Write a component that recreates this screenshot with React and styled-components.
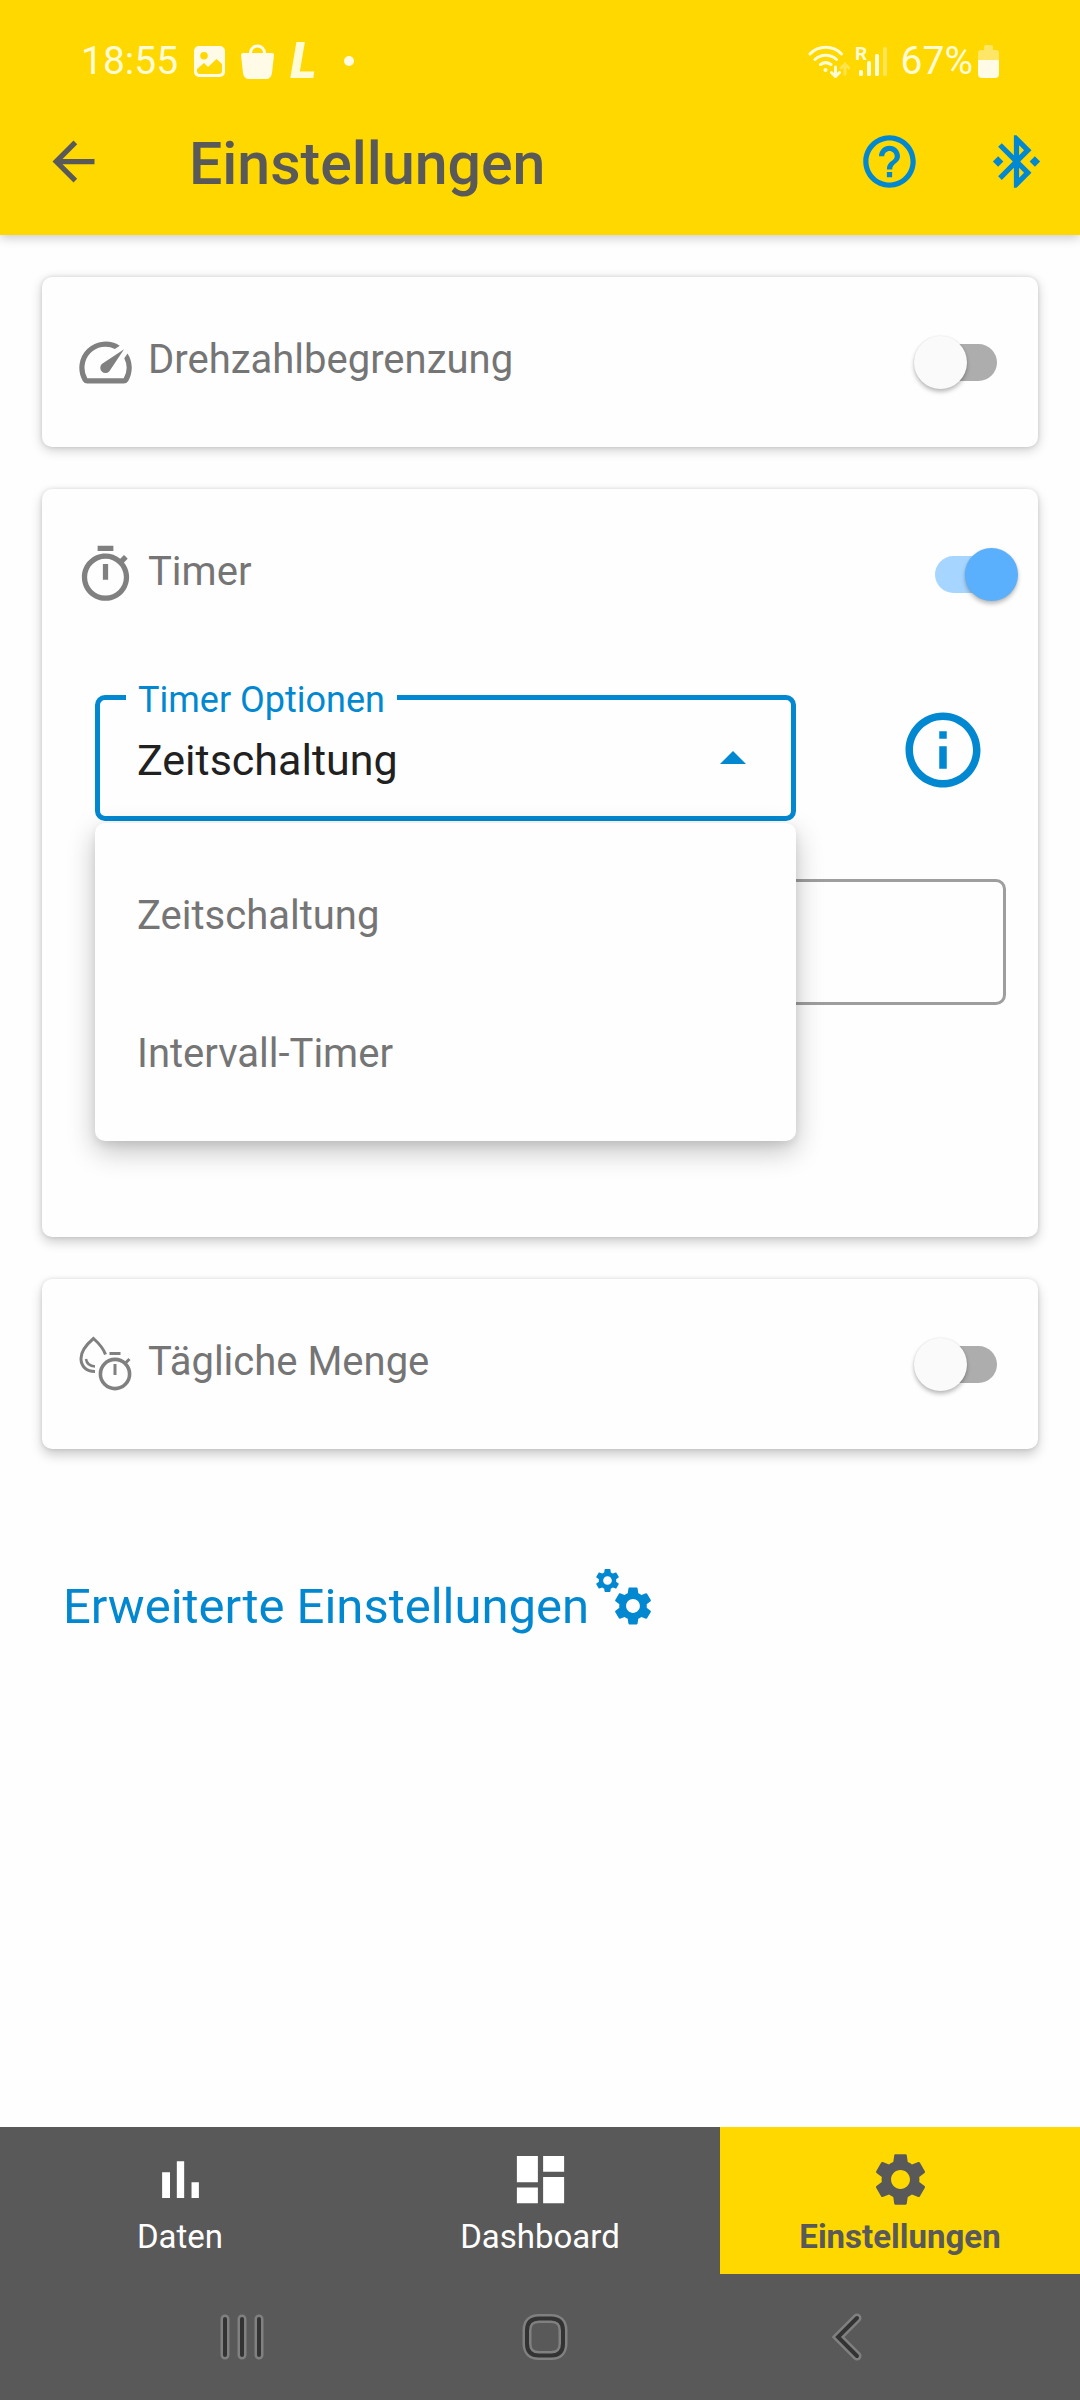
import React, { useState } from 'react';
import styled, { createGlobalStyle, css } from 'styled-components';
import {
  MdArrowBack,
  MdBluetoothConnected,
  MdDashboard,
  MdHelpOutline,
  MdInfoOutline,
  MdOutlineTimer,
  MdSettings,
  MdSpeed,
} from 'react-icons/md';

const yellow = '#ffd800';
const blue = '#0288d1';
const dark = '#595959';
const grey = '#757575';

const GlobalStyle = createGlobalStyle`
  * {
    box-sizing: border-box;
  }

  body {
    margin: 0;
    background-color: #fefefe;
    font-family: Roboto, 'Liberation Sans', sans-serif;
  }

  button, input, select {
    font-family: inherit;
  }
`;

const Screen = styled.div`
  display: flex;
  flex-direction: column;
  min-height: 100vh;
`;

const Header = styled.header`
  background-color: ${yellow};
  box-shadow: 0 3px 10px rgba(0, 0, 0, 0.2);
`;

const StatusBar = styled.div`
  display: flex;
  align-items: center;
  justify-content: space-between;
  height: 88px;
  padding: 34px 81px 0;
  color: #fffbd6;
  font-size: 39px;
  line-height: 48px;
`;

const StatusGroup = styled.div`
  display: flex;
  align-items: center;
  gap: ${props => props.$gap}px;
`;

const AppMark = styled.span`
  font-size: 50px;
  font-style: italic;
  font-weight: 900;
`;

const Dot = styled.span`
  width: 10px;
  height: 10px;
  margin-left: 12px;
  border-radius: 50%;
  background-color: #fffbe6;
`;

const Toolbar = styled.div`
  display: flex;
  align-items: center;
  height: 147px;
  padding: 0 32px 0 42px;
`;

const IconButton = styled.button`
  display: flex;
  flex-shrink: 0;
  padding: 0;
  border: none;
  background: none;
  color: ${props => props.$color};
  cursor: pointer;
`;

const Title = styled.h1`
  flex-grow: 1;
  margin: 0;
  padding: 4px 0 0 84px;
  color: ${dark};
  font-size: 59px;
  font-weight: 500;
  line-height: 68px;
`;

const Actions = styled.div`
  display: flex;
  gap: 64px;
`;

const Content = styled.main`
  display: flex;
  flex-direction: column;
  flex-grow: 1;
  gap: 42px;
  padding: 42px;
`;

const Card = styled.section`
  border-radius: 10px;
  background-color: #fefefe;
  box-shadow: 0 ${props => props.$depth}px 12px rgba(0, 0, 0, 0.2), 0 0 4px rgba(0, 0, 0, 0.12);
`;

const SettingRow = styled.label`
  display: flex;
  align-items: center;
  gap: 11px;
  height: 170px;
  padding: 0 20px 0 32px;
  color: ${grey};
  cursor: pointer;

  & > svg {
    flex-shrink: 0;
    color: #808080;
  }
`;

const SettingName = styled.span`
  flex-grow: 1;
  padding-bottom: 4px;
  font-size: 40px;
  line-height: 48px;
`;

const Switch = styled.input`
  position: relative;
  appearance: none;
  flex-shrink: 0;
  width: 104px;
  height: 53px;
  margin: 0;
  cursor: pointer;

  &::before {
    content: '';
    position: absolute;
    inset: 8px 21px;
    border-radius: 19px;
    background-color: #adadad;
  }

  &::after {
    content: '';
    position: absolute;
    top: 0;
    left: 0;
    width: 53px;
    height: 53px;
    border-radius: 50%;
    background-color: #fafafa;
    box-shadow: 0 3px 4px rgba(0, 0, 0, 0.25), 0 0 2px rgba(0, 0, 0, 0.1);
  }

  &:checked::before {
    background-color: #a6d6ff;
  }

  &:checked::after {
    left: auto;
    right: 0;
    background-color: #5ab0fc;
  }
`;

const TimerBody = styled.div`
  padding: 36px 32px 232px 53px;
`;

const OptionRow = styled.div`
  display: flex;
  align-items: center;
  gap: 102px;
  margin-bottom: 58px;
  padding-right: 18px;

  & > button {
    padding-bottom: 16px;
  }
`;

const SelectField = styled.div`
  position: relative;
  flex-grow: 1;
`;

const fieldBox = css`
  display: block;
  width: 100%;
  height: 126px;
  border-radius: 10px;
  background-color: transparent;
  color: #212121;
  font-size: 43px;
  outline: none;
`;

const Select = styled.select`
  ${fieldBox}
  appearance: none;
  padding: 4px 80px 0 37px;
  border: 5px solid ${blue};
`;

const TimeInput = styled.input`
  ${fieldBox}
  padding: 0 39px;
  border: 3px solid #9e9e9e;
`;

const FieldLabel = styled.label`
  position: absolute;
  top: -16px;
  left: 31px;
  padding: 0 12px;
  background-color: #fefefe;
  color: ${blue};
  font-size: 36px;
  line-height: 42px;
`;

const Caret = styled.span`
  position: absolute;
  top: 56px;
  right: 50px;
  border-right: 13px solid transparent;
  border-bottom: 13px solid ${blue};
  border-left: 13px solid transparent;
  pointer-events: none;
`;

const Menu = styled.ul`
  position: absolute;
  top: 128px;
  right: 0;
  left: 0;
  z-index: 1;
  margin: 0;
  padding: 23px 0 19px;
  border-radius: 10px;
  background-color: #fefefe;
  box-shadow: 0 10px 28px rgba(0, 0, 0, 0.24), 0 4px 8px rgba(0, 0, 0, 0.08);
  list-style: none;
`;

const MenuItem = styled.button`
  display: block;
  width: 100%;
  height: 138px;
  padding: 0 42px;
  border: none;
  background: none;
  color: ${grey};
  font-size: 40px;
  text-align: left;
  cursor: pointer;
`;

const AdvancedLink = styled.a`
  display: flex;
  align-items: flex-start;
  align-self: flex-start;
  gap: 7px;
  margin: 77px 0 0 21px;
  color: ${blue};
  font-size: 49px;
  line-height: 60px;
  text-decoration: none;

  span {
    padding-top: 9px;
  }
`;

const TabBar = styled.nav`
  display: grid;
  grid-template-columns: repeat(3, 1fr);
  background-color: ${dark};
`;

const Tab = styled.a`
  display: flex;
  flex-direction: column;
  align-items: center;
  gap: 7px;
  height: 147px;
  padding-top: 21px;
  background-color: ${props => (props.$active ? yellow : dark)};
  color: ${props => (props.$active ? dark : '#fff')};
  font-size: 33px;
  font-weight: ${props => (props.$active ? 700 : 400)};
  line-height: 38px;
  text-decoration: none;
`;

const SystemBar = styled.div`
  display: flex;
  align-items: center;
  justify-content: space-between;
  height: 126px;
  padding: 0 207px 0 216px;
  background-color: ${dark};
`;

const PhotoIcon = () => (
  <svg width="31" height="31" viewBox="0 0 31 31" aria-hidden="true">
    <path
      fill="#fffbe6"
      fillRule="evenodd"
      d="M5 0h21a5 5 0 0 1 5 5v21a5 5 0 0 1-5 5H5a5 5 0 0 1-5-5V5a5 5 0 0 1 5-5zM10 6a3.8 3.8 0 1 0 0 7.600a3.800 3.800 0 0 0 0-7.600zM3 23v2q0 3 3 3h19q3 0 3-3v-7l-5.500-5L14 21l-4-4z"
    />
  </svg>
);

const BagIcon = () => (
  <svg width="33" height="35" viewBox="0 0 33 35" aria-hidden="true">
    <path d="M9.500 11V9a7 7 0 0 1 14 0v2" fill="none" stroke="#fffbe6" strokeWidth="3" />
    <path d="M2 9h29q2 0 2 2l-2 18q-1 6-6 6H8q-5 0-6-6L0 11q0-2 2-2z" fill="#fffbe6" />
  </svg>
);

const WifiIcon = () => (
  <svg width="42" height="33" viewBox="0 0 42 33" fill="none" stroke="#fffbd6" strokeWidth="3" strokeLinecap="round" aria-hidden="true">
    <path d="M2 9a22 22 0 0 1 31.500 0M7 14.500a16 16 0 0 1 21.500 0M12.500 19.500a9 9 0 0 1 10.500 0" />
    <circle cx="17.500" cy="25" r="2" fill="#fffbd6" stroke="none" />
    <path d="M27.500 22v9M23.500 27.500l4 4 4-4" />
    <path d="M37 29V19M33 23l4-4 4 4" opacity=".35" />
  </svg>
);

const SignalBars = styled.svg`
  overflow: visible;
`;

const SignalIcon = () => (
  <SignalBars width="33" height="33" viewBox="0 0 33 33" fill="#fffbd6" aria-hidden="true">
    <text x="0" y="15" fontSize="19" fontWeight="700">R</text>
    <rect x="4" y="25" width="4" height="6" rx="1.500" />
    <rect x="12" y="16" width="4" height="15" rx="1.500" />
    <rect x="20" y="9" width="4" height="22" rx="1.500" />
    <rect x="28" y="2" width="4" height="29" rx="1.500" opacity=".4" />
  </SignalBars>
);

const BatteryIcon = () => (
  <svg width="21" height="33" viewBox="0 0 21 33" aria-hidden="true">
    <path d="M8 0h5q2 0 2 2v3h3q3 0 3 3v8H0V8q0-3 3-3h3V2q0-2 2-2z" fill="#ffe666" />
    <path d="M0 15h21v14q0 4-4 4H4q-4 0-4-4z" fill="#fffbe6" />
  </svg>
);

const DropTimerIcon = () => (
  <svg width="63" height="63" viewBox="0 0 63 63" fill="none" stroke="currentColor" strokeWidth="3" aria-hidden="true">
    <path d="M21 38.500C12 38.500 7 33 7 25.500C7 18 13 11 19.500 5.500C25 10.500 29.500 15.500 31.500 21.500" />
    <path d="M12 26q1 7 9 7.500" strokeWidth="2.500" />
    <circle cx="41" cy="41" r="14.600" strokeWidth="3.600" />
    <path d="M35.500 20.500h11M41 31v11M51.500 30l4-4" />
  </svg>
);

const GearsIcon = () => (
  <svg width="56" height="57" viewBox="0 0 56 57" aria-hidden="true">
    <MdSettings x="-3" y="-2" size={29} />
    <MdSettings x="14" y="15" size={46} />
  </svg>
);

const BarsIcon = () => (
  <svg width="63" height="63" viewBox="0 0 24 24" fill="currentColor" aria-hidden="true">
    <path d="M5 9.200h3V19H5zM10.600 5h2.800v14h-2.800zM16.200 13H19v6h-2.800z" />
  </svg>
);

// light outline below, dark stroke on top
const SystemIcon = ({ d }) => (
  <svg width="52" height="52" viewBox="0 0 52 52" fill="none" strokeLinecap="round" aria-hidden="true">
    <path d={d} stroke="#808080" strokeWidth="9" />
    <path d={d} stroke="#333" strokeWidth="4" />
  </svg>
);

const timerOptions = ['Zeitschaltung', 'Intervall-Timer'];

const tabs = [
  { name: 'Daten', icon: <BarsIcon /> },
  { name: 'Dashboard', icon: <MdDashboard size={63} /> },
  { name: 'Einstellungen', icon: <MdSettings size={63} />, active: true },
];

const Setting = ({ name, icon, checked, onChange }) => (
  <SettingRow>
    {icon}
    <SettingName>{name}</SettingName>
    <Switch type="checkbox" checked={checked} onChange={e => onChange(e.target.checked)} />
  </SettingRow>
);

const App = () => {
  const [speedLimit, setSpeedLimit] = useState(false);
  const [timer, setTimer] = useState(true);
  const [dailyAmount, setDailyAmount] = useState(false);
  const [option, setOption] = useState(timerOptions[0]);
  const [menuOpen, setMenuOpen] = useState(true);
  const [time, setTime] = useState('');

  const handleSelect = (name) => {
    setOption(name);
    setMenuOpen(false);
  };

  return (
    <Screen>
      <GlobalStyle />
      <Header>
        <StatusBar>
          <StatusGroup $gap={16}>
            <span>18:55</span>
            <PhotoIcon />
            <BagIcon />
            <AppMark>L</AppMark>
            <Dot />
          </StatusGroup>
          <StatusGroup $gap={13}>
            <StatusGroup $gap={5}>
              <WifiIcon />
              <SignalIcon />
            </StatusGroup>
            <StatusGroup $gap={5}>
              <span>67%</span>
              <BatteryIcon />
            </StatusGroup>
          </StatusGroup>
        </StatusBar>
        <Toolbar>
          <IconButton $color={dark} aria-label="Zurück"><MdArrowBack size={63} /></IconButton>
          <Title>Einstellungen</Title>
          <Actions>
            <IconButton $color={blue} aria-label="Hilfe"><MdHelpOutline size={63} /></IconButton>
            <IconButton $color={blue} aria-label="Bluetooth"><MdBluetoothConnected size={63} /></IconButton>
          </Actions>
        </Toolbar>
      </Header>

      <Content>
        <Card $depth={3}>
          <Setting name="Drehzahlbegrenzung" icon={<MdSpeed size={63} />} checked={speedLimit} onChange={setSpeedLimit} />
        </Card>

        <Card $depth={5}>
          <Setting name="Timer" icon={<MdOutlineTimer size={63} />} checked={timer} onChange={setTimer} />
          <TimerBody>
            <OptionRow>
              <SelectField>
                <Select
                  id="timer-option"
                  value={option}
                  onChange={e => setOption(e.target.value)}
                  onMouseDown={(e) => {
                    e.preventDefault();
                    setMenuOpen(!menuOpen);
                  }}
                >
                  {timerOptions.map(name => <option key={name}>{name}</option>)}
                </Select>
                <FieldLabel htmlFor="timer-option">Timer Optionen</FieldLabel>
                <Caret />
                {menuOpen && (
                  <Menu>
                    {timerOptions.map(name => (
                      <li key={name}>
                        <MenuItem onClick={() => handleSelect(name)}>{name}</MenuItem>
                      </li>
                    ))}
                  </Menu>
                )}
              </SelectField>
              <IconButton $color={blue} aria-label="Info"><MdInfoOutline size={90} /></IconButton>
            </OptionRow>
            <TimeInput aria-label="Zeit" value={time} onChange={e => setTime(e.target.value)} />
          </TimerBody>
        </Card>

        <Card $depth={6}>
          <Setting name="Tägliche Menge" icon={<DropTimerIcon />} checked={dailyAmount} onChange={setDailyAmount} />
        </Card>

        <AdvancedLink href="#erweitert">
          <span>Erweiterte Einstellungen</span>
          <GearsIcon />
        </AdvancedLink>
      </Content>

      <TabBar>
        {tabs.map(tab => (
          <Tab key={tab.name} href={`#${tab.name.toLowerCase()}`} $active={tab.active}>
            {tab.icon}
            {tab.name}
          </Tab>
        ))}
      </TabBar>
      <SystemBar>
        <IconButton aria-label="Letzte Apps">
          <SystemIcon d="M9 8v36M26 8v36M43 8v36" />
        </IconButton>
        <IconButton aria-label="Startseite">
          <SystemIcon d="M20 7.500h12q12 0 12 12v13q0 12-12 12H20q-12 0-12-12v-13q0-12 12-12z" />
        </IconButton>
        <IconButton aria-label="Zurück zur vorherigen Seite">
          <SystemIcon d="M36 7L17 26l19 19" />
        </IconButton>
      </SystemBar>
    </Screen>
  );
};

export default App;
